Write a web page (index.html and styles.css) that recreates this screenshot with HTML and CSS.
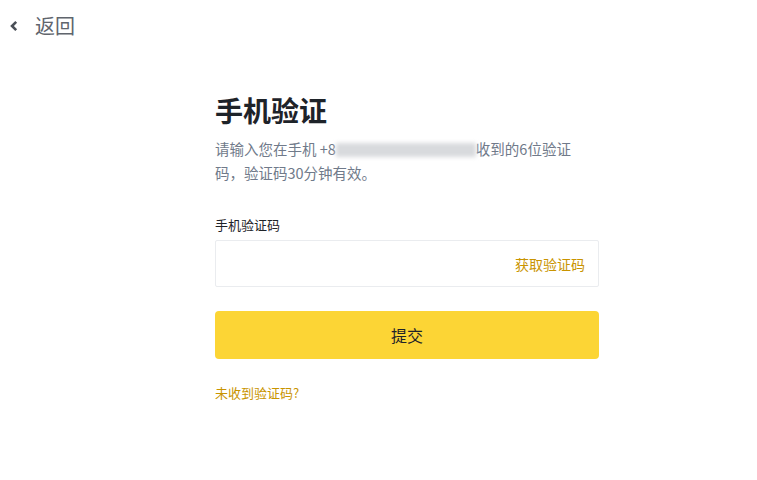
FILE: index.html
```html
<!DOCTYPE html>
<html lang="zh">
<head>
<meta charset="utf-8">
<link rel="stylesheet" href="styles.css">
</head>
<body>
<header class="topbar">
  <a class="back">
    <svg class="chev" width="10" height="12" viewBox="0 0 10 12"><path d="M7.2 1.8 L3 6 L7.2 10.2" fill="none" stroke="#4a4f57" stroke-width="2.6"/></svg>
    <span class="back-text">返回</span>
  </a>
</header>
<main class="panel">
  <h1 class="title">手机验证</h1>
  <p class="desc">请输入您在手机 +8<span class="blur"></span>收到的6位验证码，验证码30分钟有效。</p>
  <label class="label">手机验证码</label>
  <div class="field">
    <span class="get-code">获取验证码</span>
  </div>
  <button class="submit">提交</button>
  <a class="help">未收到验证码?</a>
</main>
</body>
</html>
```
FILE: styles.css
```css
* { box-sizing: border-box; }
body {
  margin: 0;
  background: #fff;
  font-family: "Microsoft YaHei", "Noto Sans CJK SC", "Noto Sans", sans-serif;
  color: #1e2329;
}
.topbar {
  height: 56px;
  padding: 11px 0 0 9px;
}
.back {
  display: flex;
  align-items: center;
  gap: 16px;
  color: #5e6673;
}
.chev { display: block; }
.back-text {
  font-size: 20px;
  line-height: 30px;
  color: #60656d;
}
.panel {
  width: 384px;
  margin-left: 215px;
  display: flex;
  flex-direction: column;
}
.title {
  margin: 34px 0 0;
  font-size: 28px;
  line-height: 40px;
  font-weight: 700;
  color: #1e2329;
}
.desc {
  margin: 7px 0 0;
  font-size: 14.5px;
  line-height: 24px;
  color: #707a8a;
}
.blur {
  display: inline-block;
  width: 140px;
  height: 14px;
  vertical-align: -2px;
  background: #d8dadd;
  filter: blur(2px);
}
.label {
  margin-top: 30px;
  font-size: 13px;
  line-height: 20px;
  color: #1e2329;
}
.field {
  margin-top: 5px;
  height: 47px;
  border: 1px solid #eaecef;
  border-radius: 2px;
  display: flex;
  align-items: center;
  justify-content: flex-end;
  padding-right: 13px;
}
.get-code {
  font-size: 14px;
  color: #c99400;
}
.submit {
  margin-top: 24px;
  height: 48px;
  border: none;
  border-radius: 4px;
  background: #fcd535;
  font-family: inherit;
  font-size: 16px;
  color: #1e2329;
}
.help {
  margin-top: 24px;
  font-size: 13px;
  line-height: 20px;
  color: #c99400;
}
```
